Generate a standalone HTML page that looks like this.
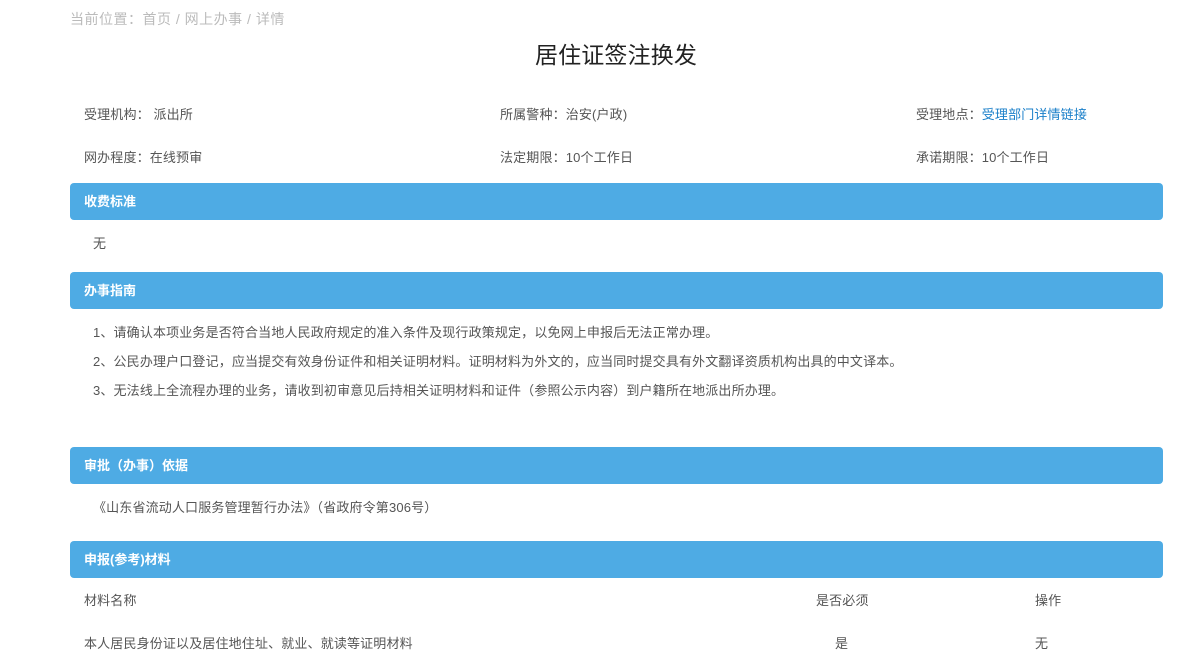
<!DOCTYPE html>
<html><head><meta charset="utf-8"><style>
body{margin:0;width:1200px;height:670px;background:#fff;font-family:"Liberation Sans","Noto Sans CJK SC",sans-serif;color:#555;position:relative;overflow:hidden}
.a{position:absolute;white-space:nowrap;font-size:13px;line-height:16px;letter-spacing:0.15px}
.bar{position:absolute;left:70px;width:1093px;height:37px;background:#4eabe4;border-radius:4px;color:#fff;font-weight:bold;font-size:13px;line-height:37px;padding-left:14px;box-sizing:border-box}
</style></head><body>
<div class="a" style="left:70px;top:11px;color:#bbb;font-size:14px;letter-spacing:0.5px">当前位置：首页 / 网上办事 / 详情</div>
<div class="a" style="left:0;width:1232px;text-align:center;top:41px;font-size:23px;line-height:28px;color:#222">居住证签注换发</div>
<div class="a" style="left:84px;top:107px">受理机构： 派出所</div>
<div class="a" style="left:500px;top:107px">所属警种：治安(户政)</div>
<div class="a" style="left:916px;top:107px">受理地点：<span style="color:#1a7fc9">受理部门详情链接</span></div>
<div class="a" style="left:84px;top:150px">网办程度：在线预审</div>
<div class="a" style="left:500px;top:150px">法定期限：10个工作日</div>
<div class="a" style="left:916px;top:150px">承诺期限：10个工作日</div>
<div class="bar" style="top:183px">收费标准</div>
<div class="a" style="left:93px;top:236px">无</div>
<div class="bar" style="top:272px">办事指南</div>
<div class="a" style="left:93px;top:325px">1、请确认本项业务是否符合当地人民政府规定的准入条件及现行政策规定，以免网上申报后无法正常办理。</div>
<div class="a" style="left:93px;top:354px">2、公民办理户口登记，应当提交有效身份证件和相关证明材料。证明材料为外文的，应当同时提交具有外文翻译资质机构出具的中文译本。</div>
<div class="a" style="left:93px;top:383px">3、无法线上全流程办理的业务，请收到初审意见后持相关证明材料和证件（参照公示内容）到户籍所在地派出所办理。</div>
<div class="bar" style="top:447px">审批（办事）依据</div>
<div class="a" style="left:93px;top:500px">《山东省流动人口服务管理暂行办法》（省政府令第306号）</div>
<div class="bar" style="top:541px">申报(参考)材料</div>
<div class="a" style="left:84px;top:593px">材料名称</div>
<div class="a" style="left:816px;top:593px">是否必须</div>
<div class="a" style="left:1035px;top:593px">操作</div>
<div class="a" style="left:84px;top:636px">本人居民身份证以及居住地住址、就业、就读等证明材料</div>
<div class="a" style="left:835px;top:636px">是</div>
<div class="a" style="left:1035px;top:636px">无</div>
</body></html>
